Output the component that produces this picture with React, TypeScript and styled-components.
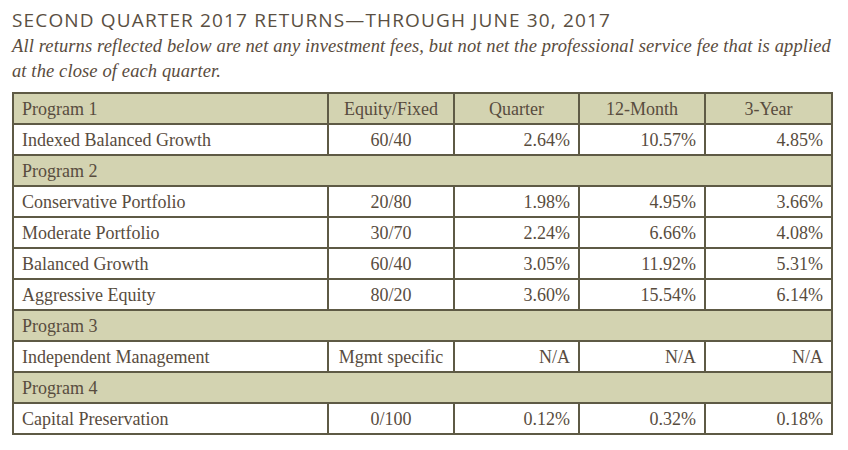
import React from 'react';
import styled, { createGlobalStyle } from 'styled-components';

type Row =
    | { kind: 'program'; label: string }
    | { kind: 'fund'; name: string; mix: string; quarter: string; year1: string; year3: string };

const rows: Row[] = [
    { kind: 'fund', name: 'Indexed Balanced Growth', mix: '60/40', quarter: '2.64%', year1: '10.57%', year3: '4.85%' },
    { kind: 'program', label: 'Program 2' },
    { kind: 'fund', name: 'Conservative Portfolio', mix: '20/80', quarter: '1.98%', year1: '4.95%', year3: '3.66%' },
    { kind: 'fund', name: 'Moderate Portfolio', mix: '30/70', quarter: '2.24%', year1: '6.66%', year3: '4.08%' },
    { kind: 'fund', name: 'Balanced Growth', mix: '60/40', quarter: '3.05%', year1: '11.92%', year3: '5.31%' },
    { kind: 'fund', name: 'Aggressive Equity', mix: '80/20', quarter: '3.60%', year1: '15.54%', year3: '6.14%' },
    { kind: 'program', label: 'Program 3' },
    { kind: 'fund', name: 'Independent Management', mix: 'Mgmt specific', quarter: 'N/A', year1: 'N/A', year3: 'N/A' },
    { kind: 'program', label: 'Program 4' },
    { kind: 'fund', name: 'Capital Preservation', mix: '0/100', quarter: '0.12%', year1: '0.32%', year3: '0.18%' },
];

const App = () => {
    return (
        <React.Fragment>
            <GlobalStyle />
            <Page>
                <Title>SECOND QUARTER 2017 RETURNS—THROUGH JUNE 30, 2017</Title>
                <Note>
                    All returns reflected below are net any investment fees, but not net the professional service fee that is applied
                    <br />
                    at the close of each quarter.
                </Note>
                <Table>
                    <colgroup>
                        <col style={{ width: 315 }} />
                        <col style={{ width: 126 }} />
                        <col style={{ width: 125 }} />
                        <col style={{ width: 126 }} />
                        <col style={{ width: 127 }} />
                    </colgroup>
                    <tbody>
                        <HeadRow>
                            <Cell>Program 1</Cell>
                            <Cell $align="center">Equity/Fixed</Cell>
                            <Cell $align="center">Quarter</Cell>
                            <Cell $align="center">12-Month</Cell>
                            <Cell $align="center">3-Year</Cell>
                        </HeadRow>
                        {rows.map((r, i) =>
                            r.kind === 'program' ? (
                                <HeadRow key={i}>
                                    <Cell colSpan={5}>{r.label}</Cell>
                                </HeadRow>
                            ) : (
                                <BodyRow key={i}>
                                    <Cell>{r.name}</Cell>
                                    <Cell $align="center">{r.mix}</Cell>
                                    <Cell $align="right">{r.quarter}</Cell>
                                    <Cell $align="right">{r.year1}</Cell>
                                    <Cell $align="right">{r.year3}</Cell>
                                </BodyRow>
                            )
                        )}
                    </tbody>
                </Table>
            </Page>
        </React.Fragment>
    );
};

const GlobalStyle = createGlobalStyle`
    body {
        margin: 0;
        background: #ffffff;
    }
`;

const Page = styled.div`
    width: 848px;
    height: 450px;
    padding: 8px 0 0 12px;
    box-sizing: border-box;
    color: #574c3f;
`;

const Title = styled.h1`
    margin: 0;
    font-family: "Open Sans", sans-serif;
    font-weight: 400;
    font-size: 19px;
    line-height: 24px;
    letter-spacing: 1.15px;
    color: #5a4f42;
`;

const Note = styled.p`
    margin: 2px 0 0 0;
    width: 836px;
    white-space: nowrap;
    font-family: "Liberation Serif", serif;
    font-style: italic;
    font-size: 18.5px;
    line-height: 25px;
    letter-spacing: 0.12px;
    color: #5a4c3d;
`;

const Table = styled.table`
    margin-top: 8px;
    width: 819px;
    border-collapse: collapse;
    table-layout: fixed;
    border: 2px solid #5e5a45;
    font-family: "Liberation Serif", serif;
    font-size: 18px;
    color: #584c3e;
`;

const HeadRow = styled.tr`
    height: 31px;
    background: #d3d3b1;
`;

const BodyRow = styled.tr`
    height: 31px;
    background: #ffffff;
`;

const Cell = styled.td<{ $align?: 'left' | 'center' | 'right' }>`
    border: 2px solid #5e5a45;
    padding: 1px 8px 0 8px;
    text-align: ${p => p.$align || 'left'};
    white-space: nowrap;
    vertical-align: middle;
`;

export default App;
